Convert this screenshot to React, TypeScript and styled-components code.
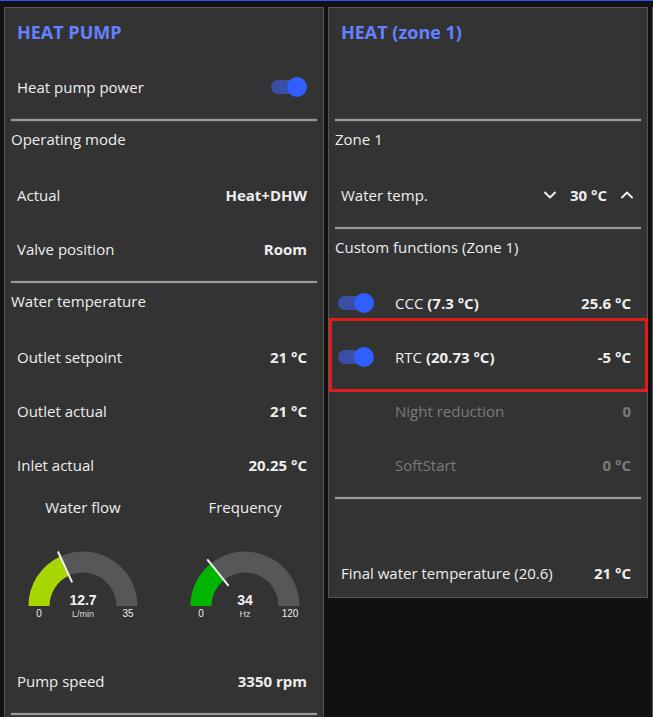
import React from "react"
import styled, { createGlobalStyle } from "styled-components"
import { ChevronDown, ChevronUp } from "lucide-react"

const GlobalStyle = createGlobalStyle`
  html, body {
    margin: 0;
    padding: 0;
    background: #111;
    overflow: hidden;
  }
  body {
    font-family: "Open Sans", "Noto Sans", sans-serif;
    color: #eee;
  }
`

const TopEdge = styled.div`
  height: 1px;
  background: #2f52ff;
`

const Board = styled.div`
  display: flex;
  align-items: flex-start;
  gap: 4px;
  padding: 6px 0 0 4px;
  width: max-content;
`

const Group = styled.section<{ $height?: number }>`
  width: 320px;
  flex-shrink: 0;
  box-sizing: border-box;
  background: #333;
  border: 1px solid #555;
  padding: 0 6px;
  display: flex;
  flex-direction: column;
  gap: 6px;
  ${p => p.$height ? `height: ${p.$height}px;` : ""}
`

const GroupTitle = styled.h2`
  margin: 0;
  height: 49px;
  line-height: 49px;
  padding-left: 6px;
  font-size: 18px;
  font-weight: 700;
  color: #6482ff;
`

const Row = styled.div<{ $muted?: boolean; $right?: number }>`
  position: relative;
  height: 48px;
  display: flex;
  align-items: center;
  padding: 0 ${p => p.$right ?? 10}px 0 6px;
  color: ${p => p.$muted ? "#7b7b7b" : "#eee"};
  font-size: 15px;
`

const SwitchRow = styled(Row)`
  padding-left: 3px;
`

const Blank = styled.div`
  height: 48px;
`

const Label = styled.span`
  flex: 1;
  white-space: nowrap;
`

const Value = styled.span`
  font-weight: 700;
  white-space: nowrap;
`

const Section = styled.div`
  height: 48px;
  box-sizing: border-box;
  padding-top: 2px;
`

const Rule = styled.div`
  height: 2px;
  background: #9a9a9a;
  box-shadow: 0 0 2px rgba(200, 200, 200, 0.35);
`

const SectionLabel = styled.div`
  margin-top: 8px;
  font-size: 15px;
  line-height: 20px;
`

const Track = styled.span<{ $on?: boolean }>`
  position: relative;
  flex-shrink: 0;
  width: 36px;
  height: 20px;

  &::before {
    content: "";
    position: absolute;
    left: 0;
    top: 3px;
    width: 30px;
    height: 14px;
    border-radius: 7px;
    background: ${p => p.$on ? "#3a4ea6" : "#666"};
  }

  &::after {
    content: "";
    position: absolute;
    top: 0;
    left: ${p => p.$on ? 16 : 0}px;
    width: 20px;
    height: 20px;
    border-radius: 50%;
    background: ${p => p.$on ? "#2f5fff" : "#bbb"};
  }
`

const SwitchSlot = styled.span`
  width: 36px;
  flex-shrink: 0;
`

const SwitchLabel = styled(Label)`
  margin-left: 21px;
`

const Stepper = styled.span`
  display: flex;
  align-items: center;
  gap: 10px;
  color: #eee;

  svg {
    display: block;
  }
`

const Marked = styled.div`
  position: relative;

  &::after {
    content: "";
    position: absolute;
    top: -15px;
    bottom: -11px;
    left: -6px;
    right: -7px;
    border: 3px solid #e01d1d;
    pointer-events: none;
  }
`

const GaugeRow = styled.div`
  height: 156px;
  display: flex;
  justify-content: space-between;
`

const GaugeCell = styled.div`
  width: 144px;
  display: flex;
  flex-direction: column;
`

const GaugeTitle = styled.div`
  height: 24px;
  line-height: 24px;
  text-align: center;
  font-size: 15px;
`

const GaugeFace = styled.svg`
  display: block;
  font-family: "Liberation Sans", Arial, sans-serif;
`

type GaugeProps = {
  title: string
  value: number
  unit: string
  min: number
  max: number
  color: string
}

const point = (cx: number, cy: number, r: number, a: number) =>
  `${(cx - r * Math.cos(a)).toFixed(2)} ${(cy - r * Math.sin(a)).toFixed(2)}`

const band = (cx: number, cy: number, R: number, r: number, a: number) =>
  `M ${cx - R} ${cy} A ${R} ${R} 0 0 1 ${point(cx, cy, R, a)} ` +
  `L ${point(cx, cy, r, a)} A ${r} ${r} 0 0 0 ${cx - r} ${cy} Z`

const Gauge = ({ title, value, unit, min, max, color }: GaugeProps) => {
  const cx = 72
  const cy = 87
  const R = 54.5
  const r = 33.5
  const a = ((value - min) / (max - min)) * Math.PI
  return (
    <GaugeCell>
      <GaugeTitle>{title}</GaugeTitle>
      <GaugeFace width={144} height={132} viewBox="0 0 144 132">
        <path d={band(cx, cy, R, r, Math.PI)} fill="#575757" />
        <path d={band(cx, cy, R, r, a)} fill={color} />
        <line
          x1={cx - 26 * Math.cos(a)} y1={cy - 26 * Math.sin(a)}
          x2={cx - 60 * Math.cos(a)} y2={cy - 60 * Math.sin(a)}
          stroke="#f2f2f2" strokeWidth={2}
        />
        <text x={cx} y={86} textAnchor="middle" fontSize={14} fontWeight={700} fill="#f2f2f2">
          {value}
        </text>
        <text x={cx} y={98} textAnchor="middle" fontSize={9} fill="#ddd">{unit}</text>
        <text x={cx - 44} y={98} textAnchor="middle" fontSize={10} fill="#eee">{min}</text>
        <text x={cx + 45} y={98} textAnchor="middle" fontSize={10} fill="#eee">{max}</text>
      </GaugeFace>
    </GaugeCell>
  )
}

const Divider = ({ label }: { label?: string }) => (
  <Section>
    <Rule />
    {label && <SectionLabel>{label}</SectionLabel>}
  </Section>
)

const HeatPump = () => (
  <Group>
    <GroupTitle>HEAT PUMP</GroupTitle>
    <Row>
      <Label>Heat pump power</Label>
      <Track $on />
    </Row>
    <Divider label="Operating mode" />
    <Row>
      <Label>Actual</Label>
      <Value>Heat+DHW</Value>
    </Row>
    <Row>
      <Label>Valve position</Label>
      <Value>Room</Value>
    </Row>
    <Divider label="Water temperature" />
    <Row>
      <Label>Outlet setpoint</Label>
      <Value>21 °C</Value>
    </Row>
    <Row>
      <Label>Outlet actual</Label>
      <Value>21 °C</Value>
    </Row>
    <Row>
      <Label>Inlet actual</Label>
      <Value>20.25 °C</Value>
    </Row>
    <GaugeRow>
      <Gauge title="Water flow" value={12.7} unit="L/min" min={0} max={35} color="#a8d600" />
      <Gauge title="Frequency" value={34} unit="Hz" min={0} max={120} color="#00b400" />
    </GaugeRow>
    <Row>
      <Label>Pump speed</Label>
      <Value>3350 rpm</Value>
    </Row>
    <Divider />
  </Group>
)

const HeatZone = () => (
  <Group>
    <GroupTitle>HEAT (zone 1)</GroupTitle>
    <Blank />
    <Divider label="Zone 1" />
    <Row $right={4}>
      <Label>Water temp.</Label>
      <Stepper>
        <ChevronDown size={20} strokeWidth={2.4} />
        <Value>30 °C</Value>
        <ChevronUp size={20} strokeWidth={2.4} />
      </Stepper>
    </Row>
    <Divider label="Custom functions (Zone 1)" />
    <SwitchRow>
      <Track $on />
      <SwitchLabel>CCC <b>(7.3 °C)</b></SwitchLabel>
      <Value>25.6 °C</Value>
    </SwitchRow>
    <Marked>
      <SwitchRow>
        <Track $on />
        <SwitchLabel>RTC <b>(20.73 °C)</b></SwitchLabel>
        <Value>-5 °C</Value>
      </SwitchRow>
    </Marked>
    <SwitchRow $muted>
      <SwitchSlot />
      <SwitchLabel>Night reduction</SwitchLabel>
      <Value>0</Value>
    </SwitchRow>
    <SwitchRow $muted>
      <SwitchSlot />
      <SwitchLabel>SoftStart</SwitchLabel>
      <Value>0 °C</Value>
    </SwitchRow>
    <Divider />
    <Row>
      <Label>Final water temperature (20.6)</Label>
      <Value>21 °C</Value>
    </Row>
  </Group>
)

export default function App() {
  return (
    <>
      <GlobalStyle />
      <TopEdge />
      <Board>
        <HeatPump />
        <HeatZone />
        <Group $height={720} />
      </Board>
    </>
  )
}
